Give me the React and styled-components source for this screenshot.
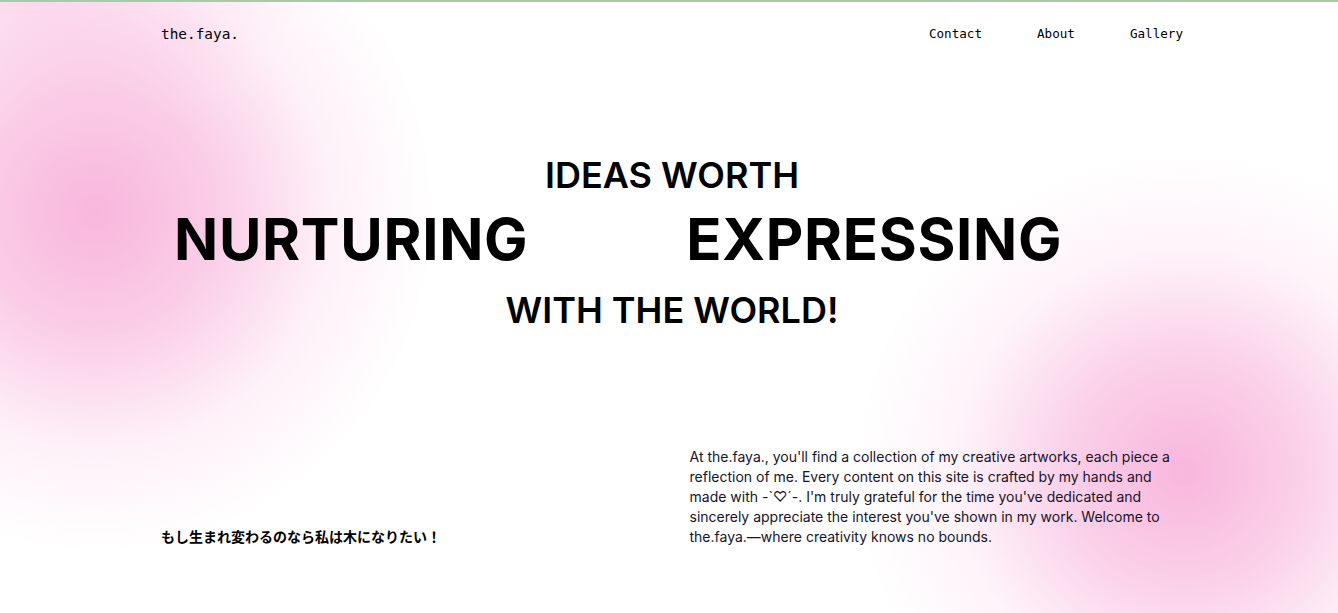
import React from "react"
import styled, { createGlobalStyle } from "styled-components"

const GlobalStyle = createGlobalStyle`
  html, body {
    margin: 0;
    padding: 0;
  }
  body {
    font-family: "Inter", "Noto Sans", sans-serif;
    color: #000;
    background: #fff;
  }
  * {
    box-sizing: border-box;
  }
`

const Page = styled.div`
  min-height: 100vh;
  border-top: 2px solid #a9c9a9;
  background:
    radial-gradient(ellipse 340px 340px at 95px 210px, rgba(248, 182, 220, 1) 0%, rgba(249, 192, 225, 0.8) 35%, rgba(252, 220, 238, 0.4) 70%, rgba(255, 255, 255, 0) 100%),
    radial-gradient(ellipse 330px 320px at 1185px 470px, rgba(248, 182, 220, 1) 0%, rgba(249, 192, 225, 0.75) 35%, rgba(252, 222, 239, 0.35) 70%, rgba(255, 255, 255, 0) 100%),
    radial-gradient(ellipse 260px 120px at 40px 0px, rgba(252, 214, 234, 0.8) 0%, rgba(255, 255, 255, 0) 100%),
    #fff;
`

const Container = styled.div`
  width: 1024px;
  margin: 0 auto;
`

const Header = styled.header`
  display: flex;
  align-items: center;
  justify-content: space-between;
  height: 62px;
  padding-left: 4px;
`

const Logo = styled.a`
  font-family: "DejaVu Sans Mono", "Liberation Mono", monospace;
  font-size: 14.4px;
  color: #000;
  text-decoration: none;
  margin-top: 2px;
`

const Nav = styled.nav`
  display: flex;
  gap: 55px;
  margin-right: -2px;
`

const NavLink = styled.a`
  font-family: "DejaVu Sans Mono", "Liberation Mono", monospace;
  font-size: 12.6px;
  color: #000;
  text-decoration: none;
`

const Hero = styled.section`
  display: flex;
  flex-direction: column;
  align-items: center;
  padding-top: 89px;
`

const SmallLine = styled.h2`
  margin: ${(p) => p.$top || 0}px 0 0 ${(p) => p.$shift || 0}px;
  font-size: 36px;
  font-weight: 600;
  line-height: 44px;
`

const WordRow = styled.div`
  display: flex;
  align-self: flex-start;
  gap: 158px;
  padding-left: 17px;
  margin-top: 7px;
`

const BigWord = styled.h1`
  margin: 0;
  font-size: 58px;
  font-weight: 700;
  line-height: 70px;
  letter-spacing: 0.012em;
`

const Bottom = styled.section`
  display: grid;
  grid-template-columns: 1fr 1fr;
  gap: 37px;
  align-items: end;
  margin-top: 115px;
  padding-left: 4px;
`

const Tagline = styled.p`
  margin: 0 0 1px;
  font-family: "Noto Sans CJK JP", "Noto Sans", sans-serif;
  font-size: 14px;
  font-weight: 700;
  line-height: 20px;
`

const About = styled.p`
  margin: 0;
  font-size: 14px;
  line-height: 20px;
  color: #14142b;
  max-width: 490px;
`

export default function App() {
  return (
    <>
      <GlobalStyle />
      <Page>
        <Container>
          <Header>
            <Logo href="#">the.faya.</Logo>
            <Nav>
              <NavLink href="#">Contact</NavLink>
              <NavLink href="#">About</NavLink>
              <NavLink href="#">Gallery</NavLink>
            </Nav>
          </Header>
          <Hero>
            <SmallLine $shift={6}>IDEAS WORTH</SmallLine>
            <WordRow>
              <BigWord>NURTURING</BigWord>
              <BigWord>EXPRESSING</BigWord>
            </WordRow>
            <SmallLine $shift={6} $top={14}>WITH THE WORLD!</SmallLine>
          </Hero>
          <Bottom>
            <Tagline>もし生まれ変わるのなら私は木になりたい！</Tagline>
            <About>
              At the.faya., you'll find a collection of my creative artworks,
              each piece a reflection of me. Every content on this site is
              crafted by my hands and made with -`♡´-. I'm truly grateful for
              the time you've dedicated and sincerely appreciate the interest
              you've shown in my work. Welcome to the.faya.—where creativity
              knows no bounds.
            </About>
          </Bottom>
        </Container>
      </Page>
    </>
  )
}
